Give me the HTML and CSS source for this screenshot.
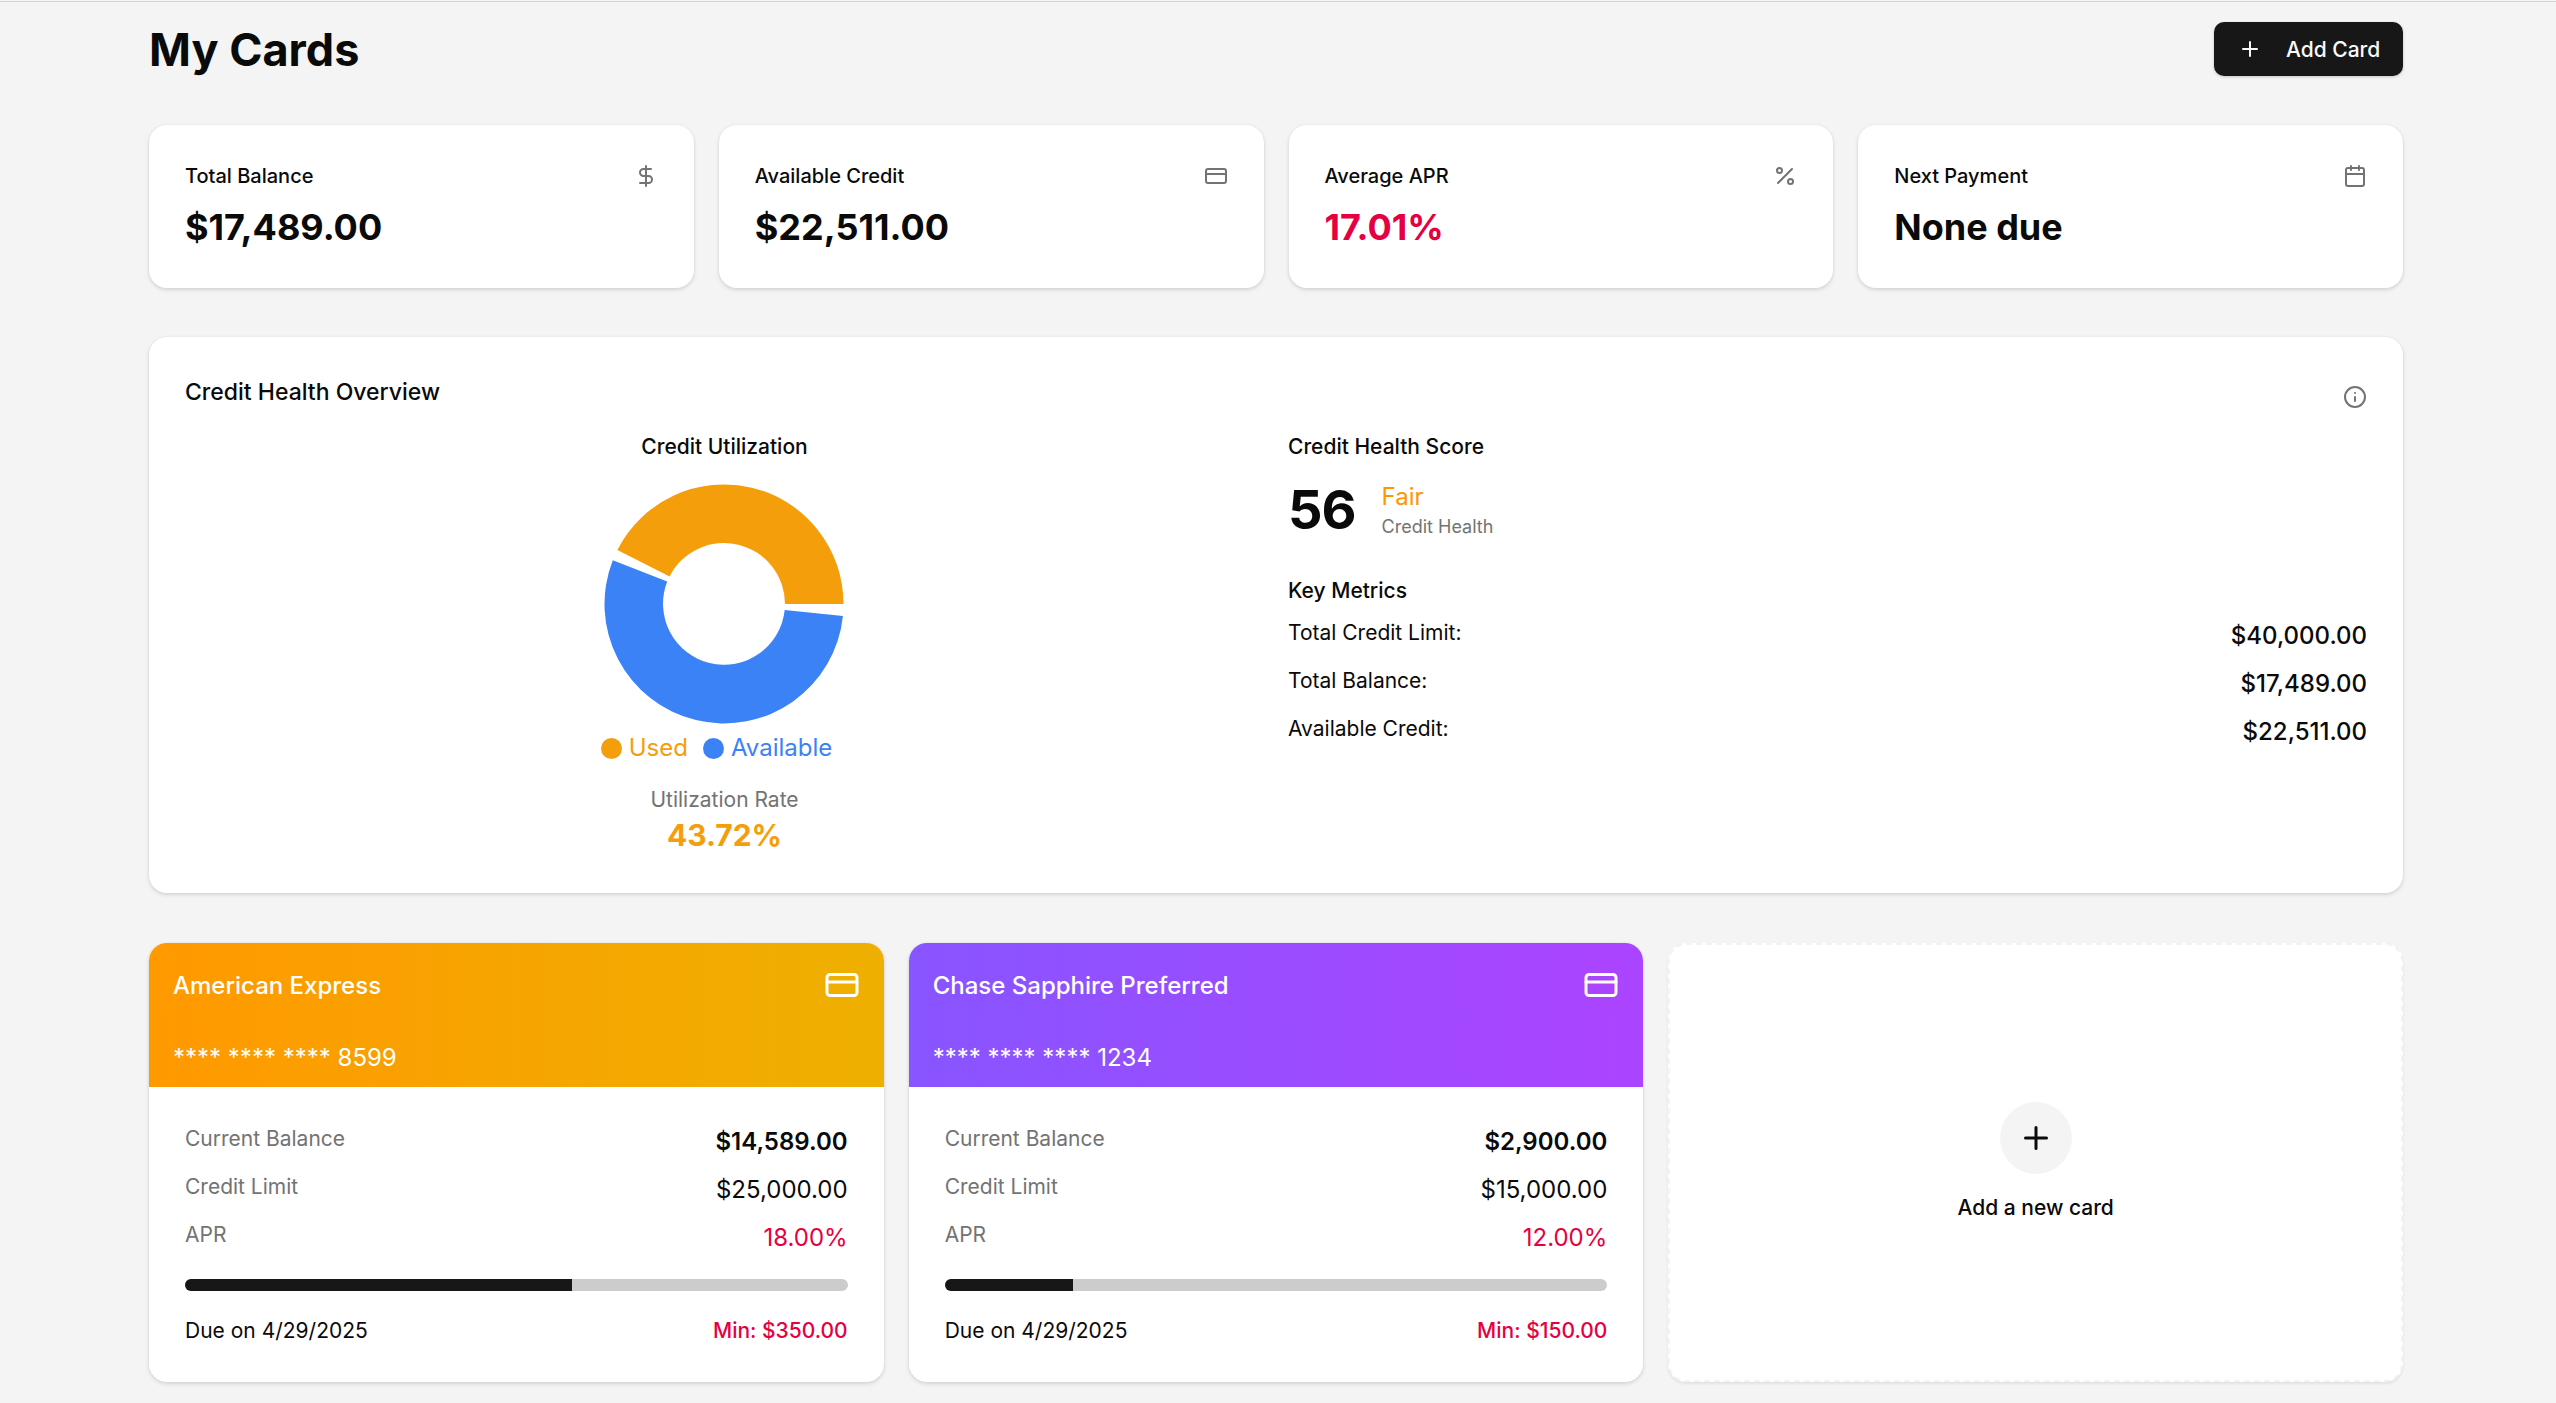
FILE: index.html
```html
<!DOCTYPE html>
<html lang="en">
<head>
<meta charset="utf-8">
<title>My Cards</title>
<link rel="stylesheet" href="styles.css">
</head>
<body>
<div class="topline"></div>
<main class="page">
  <header class="head">
    <h1>My Cards</h1>
    <button class="add"><svg class="i24" viewBox="0 0 24 24"><path d="M5 12h14M12 5v14"/></svg>Add Card</button>
  </header>
  <section class="stats">
    <div class="panel stat"><div class="stat-top"><span>Total Balance</span><svg class="ico" viewBox="0 0 24 24"><path d="M12 2v20M17 5H9.5a3.5 3.5 0 0 0 0 7h5a3.5 3.5 0 0 1 0 7H6"/></svg></div><div class="stat-val">$17,489.00</div></div>
    <div class="panel stat"><div class="stat-top"><span>Available Credit</span><svg class="ico" viewBox="0 0 24 24"><rect x="2" y="5" width="20" height="14" rx="2"/><path d="M2 10h20"/></svg></div><div class="stat-val">$22,511.00</div></div>
    <div class="panel stat"><div class="stat-top"><span>Average APR</span><svg class="ico" viewBox="0 0 24 24"><path d="M19 5 5 19"/><circle cx="6.5" cy="6.5" r="2.5"/><circle cx="17.5" cy="17.5" r="2.5"/></svg></div><div class="stat-val red">17.01%</div></div>
    <div class="panel stat"><div class="stat-top"><span>Next Payment</span><svg class="ico" viewBox="0 0 24 24"><rect x="3" y="4" width="18" height="18" rx="2"/><path d="M16 2v4M8 2v4M3 10h18"/></svg></div><div class="stat-val">None due</div></div>
  </section>
  <section class="panel health">
    <div class="health-head"><h2>Credit Health Overview</h2><svg class="ico" viewBox="0 0 24 24"><circle cx="12" cy="12" r="10"/><path d="M12 16v-4M12 8h.01"/></svg></div>
    <div class="health-body">
      <div class="util">
        <h3>Credit Utilization</h3>
        <svg class="donut" viewBox="0 0 240 240">
          <path class="used" d="M239.5 120A119.5 119.5 0 0 0 13.4 65.9L65.6 92.4A61 61 0 0 1 181 120Z"/>
          <path class="avail" d="M238.9 131.9A119.5 119.5 0 1 1 8.8 76.2L63.2 97.6A61 61 0 1 0 180.7 126.1Z"/>
        </svg>
        <div class="legend"><span class="lg-used"><i></i>Used</span><span class="lg-avail"><i></i>Available</span></div>
        <div class="rate-label">Utilization Rate</div>
        <div class="rate">43.72%</div>
      </div>
      <div class="score">
        <h3>Credit Health Score</h3>
        <div class="score-row"><span class="score-num">56</span><div class="score-txt"><div class="fair">Fair</div><div class="sub">Credit Health</div></div></div>
        <h3 class="km">Key Metrics</h3>
        <div class="metric"><span>Total Credit Limit:</span><b>$40,000.00</b></div>
        <div class="metric"><span>Total Balance:</span><b>$17,489.00</b></div>
        <div class="metric"><span>Available Credit:</span><b>$22,511.00</b></div>
      </div>
    </div>
  </section>
  <section class="cards">
    <article class="panel card">
      <div class="banner amex">
        <div class="b-top"><span>American Express</span><svg class="b-ico" viewBox="0 0 24 24"><rect x="2" y="5" width="20" height="14" rx="2"/><path d="M2 10h20"/></svg></div>
        <div class="num">**** **** **** 8599</div>
      </div>
      <div class="c-body">
        <div class="row"><span>Current Balance</span><b class="strong">$14,589.00</b></div>
        <div class="row"><span>Credit Limit</span><b>$25,000.00</b></div>
        <div class="row"><span>APR</span><b class="red">18.00%</b></div>
        <div class="bar"><div class="fill" style="width:58.36%"></div></div>
        <div class="due"><span>Due on 4/29/2025</span><span class="red med">Min: $350.00</span></div>
      </div>
    </article>
    <article class="panel card">
      <div class="banner chase">
        <div class="b-top"><span>Chase Sapphire Preferred</span><svg class="b-ico" viewBox="0 0 24 24"><rect x="2" y="5" width="20" height="14" rx="2"/><path d="M2 10h20"/></svg></div>
        <div class="num">**** **** **** 1234</div>
      </div>
      <div class="c-body">
        <div class="row"><span>Current Balance</span><b class="strong">$2,900.00</b></div>
        <div class="row"><span>Credit Limit</span><b>$15,000.00</b></div>
        <div class="row"><span>APR</span><b class="red">12.00%</b></div>
        <div class="bar"><div class="fill" style="width:19.33%"></div></div>
        <div class="due"><span>Due on 4/29/2025</span><span class="red med">Min: $150.00</span></div>
      </div>
    </article>
    <article class="panel newcard">
      <div class="plus"><svg class="i36" viewBox="0 0 24 24"><path d="M5 12h14M12 5v14"/></svg></div>
      <div class="new-txt">Add a new card</div>
    </article>
  </section>
</main>
</body>
</html>
```
FILE: styles.css
```css
* { box-sizing: border-box; }
html, body { margin: 0; padding: 0; }
body { background: #f4f4f4; color: #0a0a0a; font-family: Inter, "Liberation Sans", sans-serif; height: 1403px; overflow: hidden; }
.topline { height: 2px; border-bottom: 1px solid #d4d4d4; }
.page { padding: 0 153px 0 149px; }
h1, h2, h3 { margin: 0; }
svg { fill: none; stroke: currentColor; stroke-linecap: round; stroke-linejoin: round; stroke-width: 2; }
.head { display: flex; justify-content: space-between; align-items: center; height: 94px; }
h1 { font-size: 45px; font-weight: 700; }
.add { display: flex; align-items: center; gap: 24px; height: 54px; width: 189px; padding: 0 24px; background: #171717; color: #fafafa; border: 0; border-radius: 10px; font: 500 21px Inter, sans-serif; box-shadow: 0 1px 3px rgba(0,0,0,.2); white-space: nowrap; }
.i24 { width: 24px; height: 24px; flex: none; }
.panel { background: #fff; border-radius: 18px; box-shadow: 0 2px 4px rgba(0,0,0,.12), 0 0 3px rgba(0,0,0,.06); }
.stats { display: grid; grid-template-columns: repeat(4, 1fr); gap: 25px; margin-top: 29px; }
.stat { height: 163px; padding: 39px 36px 0; }
.stat-top { display: flex; justify-content: space-between; align-items: center; font-size: 20px; font-weight: 500; height: 24px; }
.ico { width: 24px; height: 24px; color: #737373; flex: none; }
.stat-val { font-size: 36px; font-weight: 700; margin-top: 14px; line-height: 50px; }
.red { color: #e60041; }
.health { height: 556px; margin-top: 49px; padding: 37px 36px 36px; }
.health-head { display: flex; justify-content: space-between; align-items: center; height: 36px; }
.health-head .ico { margin-top: 10px; }
h2 { font-size: 23px; font-weight: 500; }
.health-body { display: grid; grid-template-columns: 1fr 1fr; gap: 24px; margin-top: 23px; }
h3 { font-size: 21px; font-weight: 500; line-height: 28px; }
.util { display: flex; flex-direction: column; align-items: center; }
.donut { width: 240px; height: 240px; margin-top: 23px; margin-left: -1px; stroke: none; }
.used { fill: #f59e0b; stroke: none; }
.avail { fill: #3b82f6; stroke: none; }
.legend { display: flex; gap: 15px; font-size: 24px; margin-top: 8px; margin-right: 16px; line-height: 32px; }
.legend span { display: flex; align-items: center; gap: 7px; }
.legend i { width: 21px; height: 21px; border-radius: 50%; background: currentColor; }
.lg-used { color: #f59e0b; }
.lg-avail { color: #3b82f6; }
.rate-label { font-size: 21px; color: #737373; margin-top: 22px; line-height: 28px; }
.rate { font-size: 30px; font-weight: 700; color: #f59e0b; line-height: 42px; }
.score-row { display: flex; align-items: flex-start; gap: 26px; margin-top: 17px; }
.score-num { font-size: 54px; font-weight: 700; line-height: 64px; letter-spacing: -1px; }
.score-txt { margin-top: 4px; }
.fair { font-size: 24px; color: #ff9500; line-height: 30px; }
.sub { font-size: 18px; color: #737373; line-height: 26px; margin-top: 2px; }
.km { margin-top: 35px; margin-bottom: 15px; }
.metric { display: flex; justify-content: space-between; height: 48px; font-size: 21px; line-height: 26px; }
.metric b { font-size: 24px; font-weight: 500; margin-top: 3px; }
.cards { display: grid; grid-template-columns: repeat(3, 1fr); gap: 25px; margin-top: 50px; }
.card, .newcard { height: 439px; overflow: hidden; }
.banner { height: 144px; padding: 24px; color: #fff; }
.amex { background: linear-gradient(90deg, #ff9900, #eeb000); }
.chase { background: linear-gradient(90deg, #8855ff, #ac44ff); }
.b-top { display: flex; justify-content: space-between; align-items: center; font-size: 24px; font-weight: 500; height: 36px; }
.b-ico { width: 36px; height: 36px; }
.num { font-size: 24px; margin-top: 39px; line-height: 32px; }
.c-body { padding: 39px 36px 0; }
.row { display: flex; justify-content: space-between; height: 48px; font-size: 21px; line-height: 26px; color: #737373; }
.row b { font-size: 24px; font-weight: 400; color: #0a0a0a; margin-top: 3px; }
.row b.red { color: #e60041; }
.row b.strong { font-weight: 600; }
.bar { height: 12px; margin-top: 9px; border-radius: 6px; background: #ccc; overflow: hidden; }
.fill { height: 100%; background: #171717; }
.due { display: flex; justify-content: space-between; margin-top: 27px; font-size: 21px; line-height: 26px; }
.med { font-weight: 500; }
.panel.newcard { display: flex; flex-direction: column; align-items: center; padding-top: 157px; border: 2px dashed #f3f3f3; box-shadow: 0 2px 3px rgba(0,0,0,.08); }
.plus { width: 72px; height: 72px; border-radius: 50%; background: #f4f4f4; display: flex; align-items: center; justify-content: center; }
.i36 { width: 36px; height: 36px; stroke-width: 2; }
.new-txt { font-size: 21px; font-weight: 500; line-height: 26px; margin-top: 21px; }
```
